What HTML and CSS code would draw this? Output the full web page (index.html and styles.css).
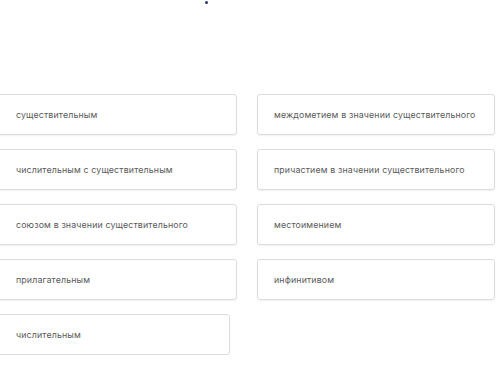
FILE: index.html
```html
<!DOCTYPE html>
<html lang="ru">
<head>
  <meta charset="UTF-8">
  <meta name="viewport" content="width=device-width, initial-scale=1.0">
  <title>Варианты ответа</title>
  <link rel="stylesheet" href="styles.css">
</head>
<body>
  <div class="top">
    <span class="dot"></span>
  </div>
  <div class="options">
    <div class="option">существительным</div>
    <div class="option">междометием в значении существительного</div>
    <div class="option">числительным с существительным</div>
    <div class="option">причастием в значении существительного</div>
    <div class="option">союзом в значении существительного</div>
    <div class="option">местоимением</div>
    <div class="option">прилагательным</div>
    <div class="option">инфинитивом</div>
    <div class="option last">числительным</div>
  </div>
</body>
</html>
```

FILE: styles.css
```css
* {
  box-sizing: border-box;
}
body {
  margin: 0;
  background: #fff;
  font-family: Inter, "Noto Sans", sans-serif;
  color: #5a5a5a;
}
.top {
  height: 94px;
  padding-left: 205px;
  padding-top: 1px;
}
.dot {
  display: block;
  width: 3px;
  height: 3px;
  border-radius: 50%;
  background: #2a3570;
}
.options {
  display: grid;
  grid-template-columns: 240px 238px;
  column-gap: 20px;
  row-gap: 14px;
  margin-left: -3px;
}
.option {
  height: 41px;
  display: flex;
  align-items: center;
  padding-left: 18px;
  border: 1px solid #dcdcdc;
  border-radius: 3px;
  box-shadow: 0 1px 2px rgba(0, 0, 0, 0.06);
  font-size: 8.8px;
  letter-spacing: 0.15px;
}
.options .option:nth-child(even) {
  padding-left: 16px;
}
.option.last {
  width: 233px;
}
```
